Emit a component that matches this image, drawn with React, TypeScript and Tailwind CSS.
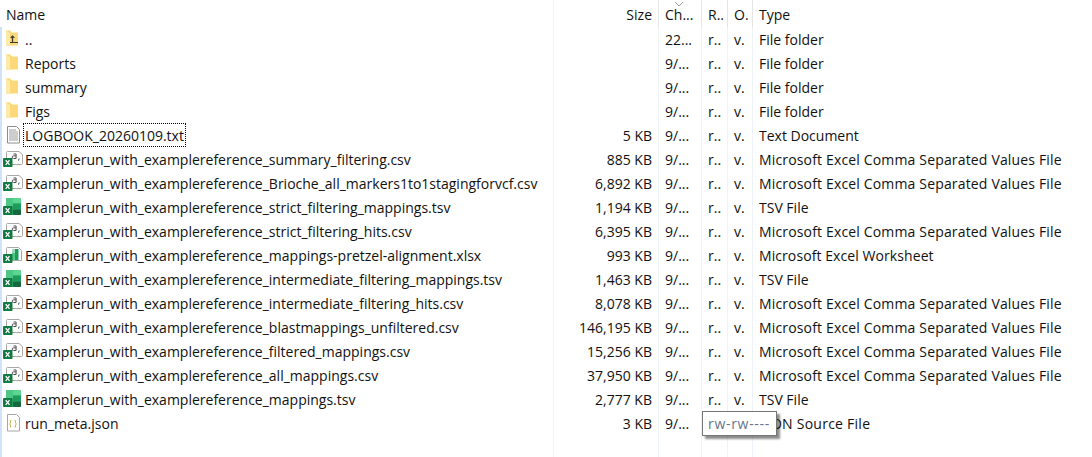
type Kind = "up" | "folder" | "txt" | "csv" | "tsv" | "xlsx" | "json";

const CSV = "Microsoft Excel Comma Separated Values File";
const rows: { name: string; size: string; changed: string; type: string; kind: Kind; focused?: boolean }[] = [
  { name: "..", size: "", changed: "22...", type: "File folder", kind: "up" },
  { name: "Reports", size: "", changed: "9/...", type: "File folder", kind: "folder" },
  { name: "summary", size: "", changed: "9/...", type: "File folder", kind: "folder" },
  { name: "Figs", size: "", changed: "9/...", type: "File folder", kind: "folder" },
  { name: "LOGBOOK_20260109.txt", size: "5 KB", changed: "9/...", type: "Text Document", kind: "txt", focused: true },
  { name: "Examplerun_with_examplereference_summary_filtering.csv", size: "885 KB", changed: "9/...", type: CSV, kind: "csv" },
  { name: "Examplerun_with_examplereference_Brioche_all_markers1to1stagingforvcf.csv", size: "6,892 KB", changed: "9/...", type: CSV, kind: "csv" },
  { name: "Examplerun_with_examplereference_strict_filtering_mappings.tsv", size: "1,194 KB", changed: "9/...", type: "TSV File", kind: "tsv" },
  { name: "Examplerun_with_examplereference_strict_filtering_hits.csv", size: "6,395 KB", changed: "9/...", type: CSV, kind: "csv" },
  { name: "Examplerun_with_examplereference_mappings-pretzel-alignment.xlsx", size: "993 KB", changed: "9/...", type: "Microsoft Excel Worksheet", kind: "xlsx" },
  { name: "Examplerun_with_examplereference_intermediate_filtering_mappings.tsv", size: "1,463 KB", changed: "9/...", type: "TSV File", kind: "tsv" },
  { name: "Examplerun_with_examplereference_intermediate_filtering_hits.csv", size: "8,078 KB", changed: "9/...", type: CSV, kind: "csv" },
  { name: "Examplerun_with_examplereference_blastmappings_unfiltered.csv", size: "146,195 KB", changed: "9/...", type: CSV, kind: "csv" },
  { name: "Examplerun_with_examplereference_filtered_mappings.csv", size: "15,256 KB", changed: "9/...", type: CSV, kind: "csv" },
  { name: "Examplerun_with_examplereference_all_mappings.csv", size: "37,950 KB", changed: "9/...", type: CSV, kind: "csv" },
  { name: "Examplerun_with_examplereference_mappings.tsv", size: "2,777 KB", changed: "9/...", type: "TSV File", kind: "tsv" },
  { name: "run_meta.json", size: "3 KB", changed: "9/...", type: "JSON Source File", kind: "json" },
];

function XBadge() {
  return (
    <>
      <rect x="0" y="8" width="9.500" height="9" rx="1" fill="#107c41" />
      <path d="M2.700 10.200l3.800 4.600M6.500 10.200l-3.800 4.600" stroke="#fff" strokeWidth="1.300" />
    </>
  );
}

function FileIcon({ kind }: { kind: Kind }) {
  if (kind === "folder" || kind === "up") {
    return (
      <svg width="18" height="18" viewBox="0 0 18 18">
        <path d="M3 0.500h4l2 2h6v13H3z" fill="#fbd878" />
        <path d="M3 0.500l4 2.500v12.500H3z" fill="#fdeaa9" />
        {kind === "up" && <path d="M7 12.500h8M9.500 12.500V6M7.700 7.800l1.800-1.800 1.800 1.800" fill="none" stroke="#3b3a2c" strokeWidth="1.200" />}
      </svg>
    );
  }
  if (kind === "txt") {
    return (
      <svg width="18" height="18" viewBox="0 0 18 18">
        <path d="M4.500 0.500h9l3 3v13.500h-12z" fill="#fff" stroke="#8c8c8c" />
        <path d="M6 4h7M6 6h9M6 8h9M6 10h9M6 12h9M6 14h9" stroke="#9a9a9a" />
      </svg>
    );
  }
  if (kind === "json") {
    return (
      <svg width="18" height="18" viewBox="0 0 18 18">
        <path d="M4.500 0.500h9l3 3v13.500h-12z" fill="#fff" stroke="#a6a6a6" />
        <path d="M8.500 6.500H7.500v2.500l-1 1 1 1v2h1M11.500 6.500h1v2.500l1 1-1 1v2h-1" fill="none" stroke="#c7bb55" />
      </svg>
    );
  }
  if (kind === "tsv") {
    return (
      <svg width="18" height="18" viewBox="0 0 18 18">
        <rect x="3" y="0" width="15" height="17" rx="1.500" fill="#35b873" />
        <rect x="3" y="0" width="7" height="8" rx="1" fill="#4cc886" />
        <rect x="10" y="0" width="8" height="5.500" rx="1" fill="#5ad692" />
        <rect x="10" y="5.500" width="8" height="6" fill="#1f9c5c" />
        <rect x="10" y="11.500" width="8" height="5.500" rx="1" fill="#14683c" />
        <XBadge />
      </svg>
    );
  }
  if (kind === "xlsx") {
    return (
      <svg width="20" height="18" viewBox="0 0 20 18">
        <path d="M3.500 2.500a1 1 0 0 1 1-1h11l3 3v10h-15z" fill="#fff" stroke="#a8a8a8" />
        <rect x="9" y="3" width="3" height="4" fill="#9fdcb8" />
        <rect x="12" y="3" width="3.500" height="11" fill="#1f9c5c" />
        <rect x="9" y="7" width="3" height="7" fill="#4cc886" />
        <XBadge />
      </svg>
    );
  }
  return (
    <svg width="21" height="18" viewBox="0 0 21 18">
      <path d="M3.500 2.500a1 1 0 0 1 1-1h11.500l3.500 3v9a1 1 0 0 1-1 1h-15z" fill="#fff" stroke="#a8a8a8" />
      <path d="M10.500 4h2.600v4.500h-2.600a1.300 1.300 0 0 1 0-2.600h2.600M16 8.500v1.300l-1 0.700" fill="none" stroke="#4d4d4d" />
      <XBadge />
    </svg>
  );
}

function typeTracking(type: string) {
  if (type === CSV) return "tracking-[0.16px]";
  if (type === "JSON Source File") return "tracking-[0.25px]";
  if (type === "Microsoft Excel Worksheet") return "tracking-[0.08px]";
  return "";
}

function Row({ row }: { row: (typeof rows)[number] }) {
  return (
    <div className="flex h-6 items-center">
      <div className="flex h-full w-[554px] items-center border-r border-[#eef3fa] pl-[3px]">
        <div className="flex w-[21px] shrink-0 items-center">
          <FileIcon kind={row.kind} />
        </div>
        <span
          className={`flex h-[22px] items-center whitespace-nowrap px-px ${row.focused ? "outline-1 outline-dotted outline-black" : ""}`}
        >
          {row.name}
        </span>
      </div>
      <div className="flex h-full w-[105px] items-center justify-end border-r border-[#eef3fa] pr-[6px]">{row.size}</div>
      <div className="flex h-full w-[43px] items-center border-r border-[#eef3fa] pl-[6px]">{row.changed}</div>
      <div className="flex h-full w-[26px] items-center border-r border-[#eef3fa] pl-[6px]">r..</div>
      <div className="flex h-full w-[25px] items-center border-r border-[#eef3fa] pl-[6px]">v.</div>
      <div className={`flex h-full flex-1 items-center whitespace-nowrap pl-[6px] ${typeTracking(row.type)}`}>{row.type}</div>
    </div>
  );
}

export default function App() {
  return (
    <div className="relative flex h-[457px] w-[1092px] flex-col overflow-hidden bg-white font-['Open_Sans','Noto_Sans',sans-serif] text-[14px] text-[#111111]">
      <div className="flex h-[27px] items-center">
        <div className="flex h-full w-[554px] items-center border-r border-[#eef3fa] pl-[6px] pt-[2px]">Name</div>
        <div className="flex h-full w-[105px] items-center justify-end border-r border-[#e5e5e5] pr-[6px] pt-[2px]">Size</div>
        <div className="relative flex h-full w-[43px] items-center border-r border-[#e5e5e5] pl-[6px] pt-[2px]">
          Ch...
          <svg className="absolute left-[15px] top-[1px]" width="10" height="6" viewBox="0 0 10 6">
            <path d="M1 1l4 4 4-4" fill="none" stroke="#a0a0a0" />
          </svg>
        </div>
        <div className="flex h-full w-[26px] items-center border-r border-[#e5e5e5] pl-[6px] pt-[2px]">R..</div>
        <div className="flex h-full w-[25px] items-center border-r border-[#e5e5e5] pl-[6px] pt-[2px]">O.</div>
        <div className="flex h-full flex-1 items-center pl-[6px] pt-[2px]">Type</div>
      </div>
      <div className="flex flex-1 border-l-2 border-[#cfe4fa]">
        <div className="-ml-[2px] flex flex-1 flex-col">
          {rows.map((row) => (
            <Row key={row.name} row={row} />
          ))}
          <div className="flex flex-1">
            <div className="w-[554px] border-r border-[#eef3fa]" />
            <div className="w-[105px] border-r border-[#eef3fa]" />
            <div className="w-[43px] border-r border-[#eef3fa]" />
            <div className="w-[26px] border-r border-[#eef3fa]" />
            <div className="w-[25px] border-r border-[#eef3fa]" />
          </div>
        </div>
      </div>
      <div className="absolute left-[702px] top-[411px] flex h-[25px] w-[75px] items-center border border-[#767676] bg-white pl-[5px] tracking-[0.7px] text-[#66758c] shadow-[3px_3px_2px_rgba(0,0,0,0.45)]">
        rw-rw----
      </div>
    </div>
  );
}
